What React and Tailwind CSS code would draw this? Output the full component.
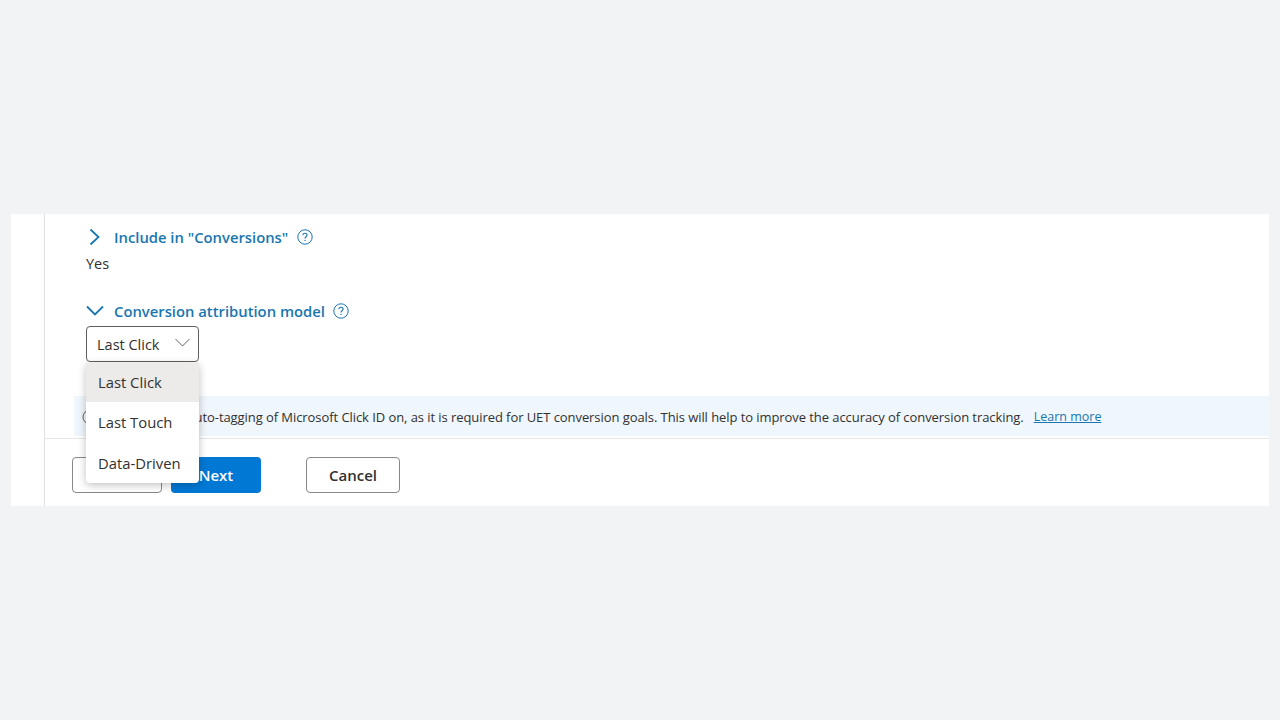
function HelpIcon({ className }) {
  return (
    <svg className={className} viewBox="0 0 16 16" fill="none" stroke="currentColor">
      <circle cx="8" cy="8" r="7.2" strokeWidth="1" />
      <path d="M5.9 6.2c0-1.2 1-2 2.1-2s2.1.8 2.1 1.9c0 1.6-2.1 1.6-2.1 3.3" strokeWidth="1.1" />
      <circle cx="8" cy="11.4" r=".7" fill="currentColor" stroke="none" />
    </svg>
  )
}

function SectionTitle({ open, children }) {
  return (
    <div className="flex items-center h-5 text-[#1a76b0] font-semibold text-[14.8px]">
      <span className="w-7 shrink-0 flex justify-start">
        {open ? (
          <svg className="w-[18px] h-5" viewBox="0 0 18 20" fill="none" stroke="currentColor" strokeWidth="1.8">
            <path d="M1 5.5l8 8 8-8" />
          </svg>
        ) : (
          <svg className="w-[18px] h-5" viewBox="0 0 18 20" fill="none" stroke="currentColor" strokeWidth="1.8">
            <path d="M4.5 2.5l8 7.5-8 7.5" />
          </svg>
        )}
      </span>
      <span className="whitespace-nowrap">{children}</span>
      <HelpIcon className={open ? 'w-4 h-4 ml-2 shrink-0' : 'w-4 h-4 ml-[9px] shrink-0'} />
    </div>
  )
}

function Dropdown() {
  return (
    <div className="absolute z-10 left-[41px] top-[149px] w-[113px] h-[120px] bg-white rounded-sm shadow-[0_2px_8px_rgba(0,0,0,0.25)] text-[14.8px] text-[#323130]">
      <div className="h-[39px] pl-3 flex items-center bg-[#edebe9]">Last Click</div>
      <div className="h-10 pl-3 flex items-center">Last Touch</div>
      <div className="h-[41px] pl-3 pt-[2px] flex items-center">Data-Driven</div>
    </div>
  )
}

export default function App() {
  return (
    <div className="h-screen bg-[#f2f3f5] flex items-center px-[11px] font-['Open_Sans','Noto_Sans',sans-serif]">
      <div className="w-full h-[292px] bg-white flex">
        <div className="w-[34px] shrink-0 border-r border-[#e1e1e1]" />
        <div className="relative flex-1 min-w-0 flex flex-col">
          <div className="pl-[41px] pt-[13px]">
            <SectionTitle>Include in "Conversions"</SectionTitle>
            <p className="mt-[7px] text-[14.5px] leading-5 text-[#323130]">Yes</p>
            <div className="mt-[27px]">
              <SectionTitle open>Conversion attribution model</SectionTitle>
            </div>
            <button className="mt-[5px] w-[113px] h-9 pl-[10px] pr-[8px] pt-[2px] flex items-center justify-between border border-[#605e5c] rounded-sm text-[14.5px] text-[#323130] whitespace-nowrap">
              Last Click
              <svg className="w-[15px] h-[9px] -mt-[6px] text-[#605e5c]" viewBox="0 0 15 9" fill="none" stroke="currentColor" strokeWidth="1">
                <path d="M.5 1l7 7 7-7" />
              </svg>
            </button>
          </div>
          <Dropdown />
          {/* Info banner */}
          <div className="mt-[34px] ml-[29px] h-10 pt-[2px] bg-[#eff6fc] flex items-center pl-[8px] text-[13px] text-[#323130] whitespace-nowrap overflow-hidden">
            <svg className="w-4 h-4 shrink-0 text-[#605e5c]" viewBox="0 0 16 16" fill="none" stroke="currentColor">
              <circle cx="8" cy="8" r="7" />
            </svg>
            <span className="ml-[15px] pt-[1px] tracking-[-0.07px]">Please keep auto-tagging of Microsoft Click ID on, as it is required for UET conversion goals. This will help to improve the accuracy of conversion tracking.</span>
            <a className="ml-[10px] pt-[1px] text-[12.5px] text-[#1a76b0] underline">Learn more</a>
          </div>
          {/* Footer buttons */}
          <div className="border-t border-[#e6e6e6] mt-[2px] pt-[18px] pl-[27px] flex items-center text-[15px]">
            <button className="w-[90px] h-9 border border-[#8a8886] rounded-sm bg-white text-[#323130] font-semibold">Back</button>
            <button className="ml-[9px] w-[90px] h-9 rounded-sm bg-[#0078d4] text-white font-semibold">Next</button>
            <button className="ml-[45px] w-[94px] h-9 border border-[#8a8886] rounded-sm bg-white text-[#323130] font-semibold">Cancel</button>
          </div>
        </div>
      </div>
    </div>
  )
}
